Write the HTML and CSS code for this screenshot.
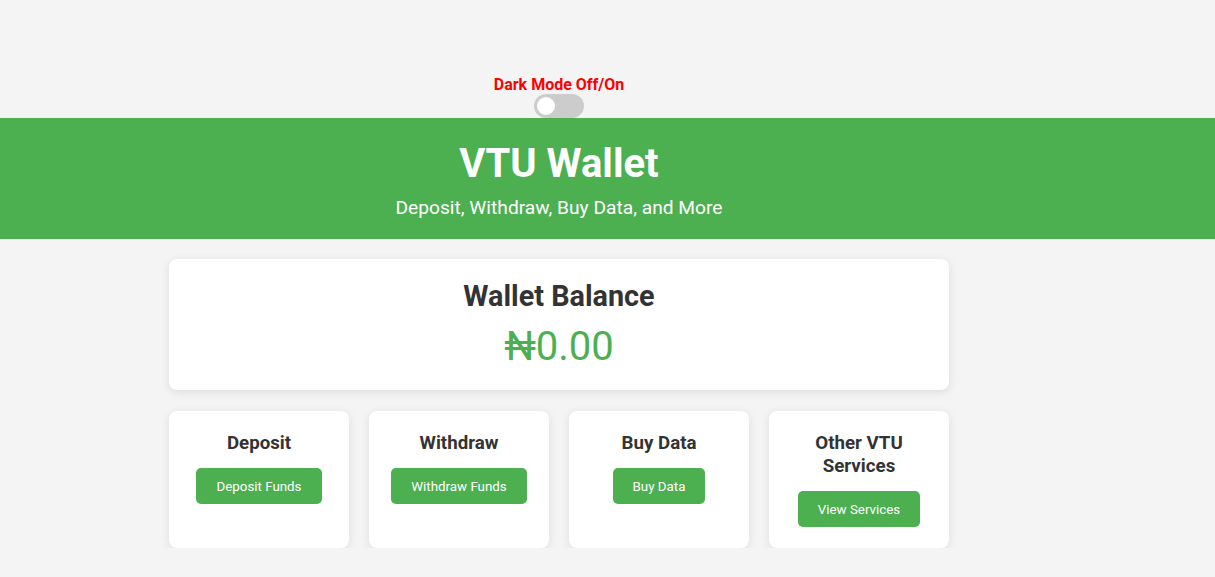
FILE: index.html
```html
<!DOCTYPE html>
<html lang="en">
<head>
<meta charset="UTF-8">
<title>VTU Wallet</title>
<link rel="stylesheet" href="styles.css">
</head>
<body>
  <div class="toggle-area">
    <div class="toggle-inner">
      <label class="toggle-label" for="darkToggle">Dark Mode Off/On</label>
      <label class="switch">
        <input type="checkbox" id="darkToggle">
        <span class="slider"></span>
      </label>
    </div>
  </div>
  <header class="header">
    <div class="header-inner">
      <h1 class="title">VTU Wallet</h1>
      <p class="subtitle">Deposit, Withdraw, Buy Data, and More</p>
    </div>
  </header>
  <main class="main">
    <section class="card balance-card">
      <h2 class="balance-title">Wallet Balance</h2>
      <p class="balance-amount">₦0.00</p>
    </section>
    <section class="services">
      <div class="card service-card">
        <h3 class="service-title">Deposit</h3>
        <button class="btn">Deposit Funds</button>
      </div>
      <div class="card service-card">
        <h3 class="service-title">Withdraw</h3>
        <button class="btn">Withdraw Funds</button>
      </div>
      <div class="card service-card">
        <h3 class="service-title">Buy Data</h3>
        <button class="btn">Buy Data</button>
      </div>
      <div class="card service-card">
        <h3 class="service-title">Other VTU Services</h3>
        <button class="btn">View Services</button>
      </div>
    </section>
  </main>
</body>
</html>
```

FILE: styles.css
```css
* { box-sizing: border-box; }

body {
  margin: 0;
  background: #f4f4f4;
  font-family: Roboto, "Liberation Sans", Arial, sans-serif;
  color: #333;
}

.toggle-area {
  padding-top: 75px;
}

.toggle-inner {
  width: 1118px;
  display: flex;
  flex-direction: column;
  align-items: center;
}

.toggle-label {
  color: red;
  font-weight: bold;
  font-size: 16px;
  line-height: 19px;
}

.switch {
  position: relative;
  display: block;
  width: 50px;
  height: 24px;
}

.switch input {
  opacity: 0;
  width: 0;
  height: 0;
  margin: 0;
}

.slider {
  position: absolute;
  inset: 0;
  background: #ccc;
  border-radius: 24px;
  cursor: pointer;
}

.slider::before {
  content: "";
  position: absolute;
  left: 3px;
  top: 3px;
  width: 18px;
  height: 18px;
  border-radius: 50%;
  background: #fff;
}

.header {
  background: #4caf50;
  color: #fff;
  padding: 22px 0 20.5px;
}

.header-inner {
  width: 1118px;
  text-align: center;
}

.title {
  margin: 0;
  font-size: 40px;
  line-height: 48px;
  font-weight: bold;
}

.subtitle {
  margin: 7.5px 0 0;
  font-size: 19.2px;
  line-height: 23px;
}

.main {
  width: 780px;
  margin-left: 169px;
  padding-top: 20px;
}

.card {
  background: #fff;
  border-radius: 8px;
  box-shadow: 0 2px 10px rgba(0, 0, 0, 0.1);
}

.balance-card {
  padding: 20px 20px 19px;
  text-align: center;
}

.balance-title {
  margin: 0;
  font-size: 28.8px;
  line-height: 34px;
  font-weight: bold;
}

.balance-amount {
  margin: 9.5px 0 0;
  font-size: 40px;
  line-height: 48px;
  color: #4caf50;
}

.services {
  display: grid;
  grid-template-columns: repeat(4, 1fr);
  gap: 20px;
  margin-top: 21px;
}

.service-card {
  padding: 21px 20px 20px;
  text-align: center;
  min-height: 137px;
}

.service-title {
  margin: 0 0 13.5px;
  font-size: 18.72px;
  line-height: 23px;
  font-weight: bold;
}

.btn {
  background: #4caf50;
  color: #fff;
  border: none;
  border-radius: 5px;
  padding: 11px 20px 9px;
  font-family: Roboto, "Liberation Sans", Arial, sans-serif;
  font-size: 13.333px;
  line-height: 16px;
  cursor: pointer;
}
```
